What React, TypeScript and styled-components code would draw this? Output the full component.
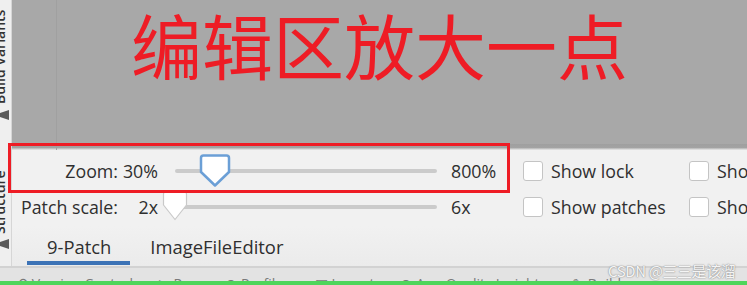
import type { FC } from "react";
import styled, { createGlobalStyle } from "styled-components";

const GlobalStyle = createGlobalStyle`
  html, body {
    margin: 0;
    padding: 0;
    background: #f1f1f1;
  }
  body {
    font-family: "Open Sans", "Noto Sans", "Liberation Sans", sans-serif;
    color: #2b2b2b;
  }
`;

const UI_FONT = `"Open Sans", "Noto Sans", "Liberation Sans", sans-serif`;

const Root = styled.div`
  position: relative;
  width: 747px;
  height: 285px;
  overflow: hidden;
  display: flex;
  flex-direction: column;
  background: #f1f1f1;
`;

const Body = styled.div`
  display: flex;
  height: 268px;
`;

const SideStrip = styled.div`
  width: 11px;
  flex: none;
  border-right: 1px solid #d6d6d6;
  background: #efefef;
  overflow: hidden;
  display: flex;
  flex-direction: column;
  align-items: flex-end;
`;

const SideLabel = styled.div<{ $height: number; $top?: number }>`
  height: ${(p) => p.$height}px;
  margin-top: ${(p) => p.$top ?? 0}px;
  writing-mode: vertical-rl;
  transform: rotate(180deg);
  font-family: ${UI_FONT};
  font-size: 14px;
  font-weight: 600;
  color: #333;
  white-space: nowrap;
  line-height: 18px;
  margin-right: 2px;
  text-align: left;
`;

const SideIcon = styled.div<{ $gap: number }>`
  width: 9px;
  height: 10px;
  margin: ${(p) => p.$gap}px 0 0;
  align-self: flex-start;
  background: #5a5a5a;
  clip-path: polygon(0 30%, 100% 0, 100% 100%, 0 70%);
`;

const Main = styled.div`
  flex: 1;
  display: flex;
  flex-direction: column;
  min-width: 0;
`;

const Canvas = styled.div`
  height: 150px;
  flex: none;
  background:
    linear-gradient(to right, transparent 44px, #a0a0a0 44px, #a0a0a0 45px, transparent 45px),
    linear-gradient(to bottom, #a8a8a8 0, #a8a8a8 144px, #9f9f9f 144px, #a3a3a3 148px, #dcdcdc 149px);
  display: flex;
  justify-content: center;
  box-sizing: border-box;
`;

const Headline = styled.div`
  font-family: "Noto Sans CJK SC", "Noto Sans", sans-serif;
  font-size: 71px;
  line-height: 90px;
  color: #ee1c25;
  margin-top: -2px;
`;

const Controls = styled.div`
  display: grid;
  grid-template-columns: 106px 42px 280px 71px 178px auto;
  grid-auto-rows: 36px;
  padding-top: 3px;
  height: 76px;
  box-sizing: border-box;
  align-items: center;
  font-family: ${UI_FONT};
  font-size: 17.8px;
  color: #2f2f2f;
`;

const Label = styled.div`
  text-align: right;
  white-space: nowrap;
`;

const Value = styled.div`
  text-align: right;
  padding-right: 2px;
  white-space: nowrap;
`;

const MaxValue = styled.div`
  padding-left: 11px;
  white-space: nowrap;
`;

const SliderCell = styled.div`
  height: 100%;
  display: flex;
  align-items: center;
  padding: 0 3px 0 15px;
`;

const Track = styled.div`
  position: relative;
  flex: 1;
  height: 4px;
  border-radius: 2px;
  background: #cbcbcb;
`;

const ThumbBox = styled.svg`
  position: absolute;
  top: -14px;
  transform: translateX(-50%);
  overflow: visible;
`;

const CheckItem = styled.label<{ $offset: number }>`
  display: flex;
  align-items: center;
  gap: 8px;
  padding-left: ${(p) => p.$offset}px;
  white-space: nowrap;
  overflow: hidden;
`;

const Box = styled.span`
  width: 18px;
  height: 18px;
  flex: none;
  border: 1px solid #c4c4c4;
  border-radius: 3px;
  background: #fff;
`;

const Tabs = styled.div`
  flex: 1;
  display: flex;
  align-items: stretch;
  padding-left: 15px;
  font-family: ${UI_FONT};
  font-size: 18.4px;
  color: #2f2f2f;
  background: linear-gradient(to bottom, #f1f1f1, #ebebeb);
`;

const Tab = styled.div<{ $active?: boolean }>`
  display: flex;
  align-items: center;
  padding: 5px 19px 0 20px;
  border-bottom: 4px solid ${(p) => (p.$active ? "#3c73b6" : "transparent")};
  margin-bottom: 1px;
`;

const BottomBar = styled.div`
  height: 13px;
  flex: none;
  border-top: 2px solid #d2d2d2;
  background: #e3e3e3;
  overflow: hidden;
  display: flex;
  gap: 26px;
  padding-left: 18px;
  font-family: ${UI_FONT};
  font-size: 14px;
  line-height: 14px;
  color: #7a7a7a;
  white-space: nowrap;
`;

const BarItem = styled.span`
  padding-top: 9px;
`;

const GreenLine = styled.div`
  height: 4px;
  flex: none;
  background: #4fd55b;
`;

const Highlight = styled.div`
  position: absolute;
  left: 8px;
  top: 143px;
  width: 496px;
  height: 44px;
  border: 3px solid #ee1c25;
  pointer-events: none;
`;

const Watermark = styled.div`
  position: absolute;
  left: 608px;
  top: 261px;
  font-family: "Noto Sans CJK SC", "Noto Sans", sans-serif;
  font-size: 15px;
  line-height: 20px;
  color: rgba(255, 255, 255, 0.92);
  text-shadow: 0 0 1px #8a8a8a, 0 0 2px #9a9a9a;
  letter-spacing: -0.4px;
`;

const Thumb: FC<{ fraction: number; focused?: boolean }> = ({ fraction, focused }) => {
  const w = focused ? 29 : 24;
  const h = focused ? 31 : 29;
  const point = focused ? 17 : 14;
  const d = `M3 0.5 H${w - 3} Q${w - 0.5} 0.5 ${w - 0.5} 3 V${point} L${w / 2} ${h - 0.5} L0.5 ${point} V3 Q0.5 0.5 3 0.5 Z`;
  return (
    <ThumbBox width={w} height={h} style={{ left: `${fraction * 100}%` }} viewBox={`0 0 ${w} ${h}`}>
      <path
        d={d}
        fill="#fff"
        stroke={focused ? "#6b9fd6" : "#c9c9c9"}
        strokeWidth={focused ? 2.5 : 1.2}
        strokeLinejoin="round"
      />
    </ThumbBox>
  );
};

const Slider: FC<{ fraction: number; focused?: boolean }> = ({ fraction, focused }) => (
  <SliderCell>
    <Track>
      <Thumb fraction={fraction} focused={focused} />
    </Track>
  </SliderCell>
);

const App: FC = () => (
  <>
    <GlobalStyle />
    <Root>
      <Body>
        <SideStrip>
          <SideLabel $height={104}>Build Variants</SideLabel>
          <SideIcon $gap={6} />
          <SideLabel $height={76} $top={38}>
            Structure
          </SideLabel>
          <SideIcon $gap={5} />
        </SideStrip>
        <Main>
          <Canvas>
            <Headline>编辑区放大一点</Headline>
          </Canvas>
          <Controls>
            <Label>Zoom:</Label>
            <Value>30%</Value>
            <Slider fraction={0.153} focused />
            <MaxValue>800%</MaxValue>
            <CheckItem $offset={12}>
              <Box />
              Show lock
            </CheckItem>
            <CheckItem $offset={0}>
              <Box />
              Show bad patches
            </CheckItem>

            <Label>Patch scale:</Label>
            <Value>2x</Value>
            <Slider fraction={0} />
            <MaxValue>6x</MaxValue>
            <CheckItem $offset={12}>
              <Box />
              Show patches
            </CheckItem>
            <CheckItem $offset={0}>
              <Box />
              Show content
            </CheckItem>
          </Controls>
          <Tabs>
            <Tab $active>9-Patch</Tab>
            <Tab>ImageFileEditor</Tab>
          </Tabs>
        </Main>
      </Body>
      <BottomBar>
        <BarItem>⚲ Version Control</BarItem>
        <BarItem>▶ Run</BarItem>
        <BarItem>⊙ Profiler</BarItem>
        <BarItem>▤ Logcat</BarItem>
        <BarItem>⊕ App Quality Insights</BarItem>
        <BarItem>✎ Build</BarItem>
      </BottomBar>
      <GreenLine />
      <Highlight />
      <Watermark>CSDN @三三是该溜子</Watermark>
    </Root>
  </>
);

export default App;
